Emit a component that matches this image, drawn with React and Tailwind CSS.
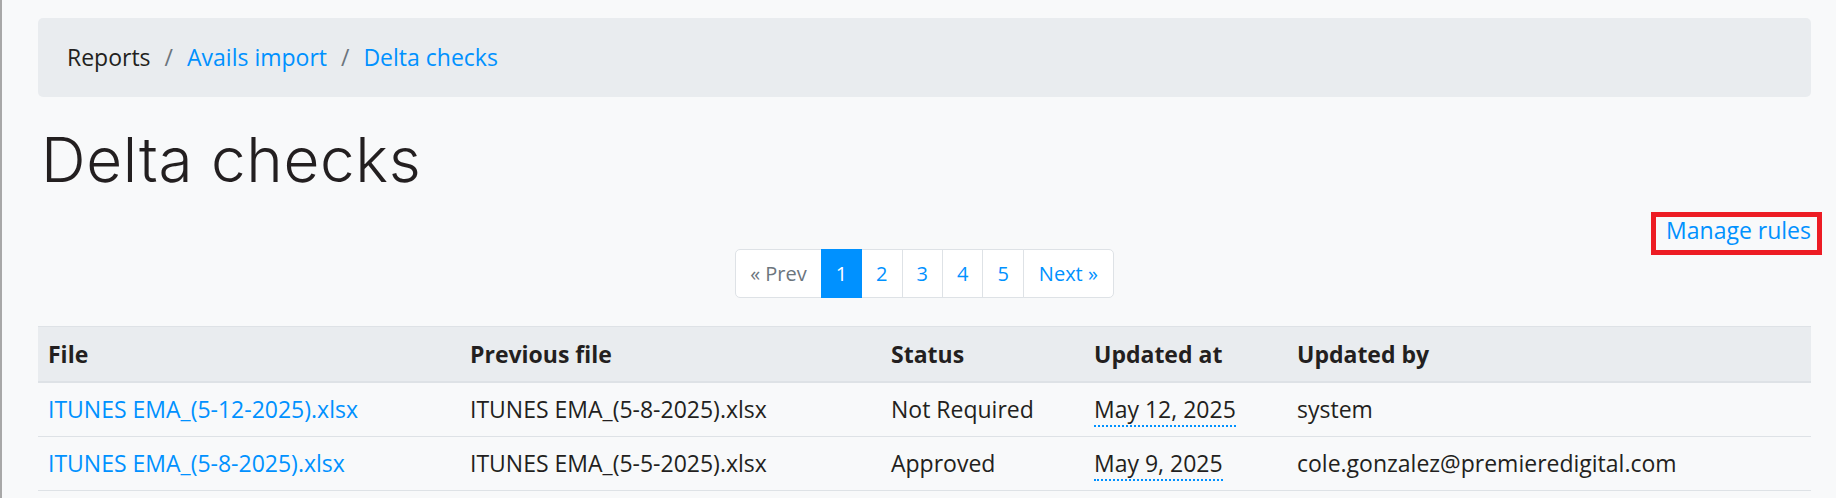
const crumbs = [
  { label: "Reports", link: false },
  { label: "Avails import", link: true },
  { label: "Delta checks", link: true },
];

const pages = ["1", "2", "3", "4", "5"];

const rows = [
  {
    file: "ITUNES EMA_(5-12-2025).xlsx",
    previous: "ITUNES EMA_(5-8-2025).xlsx",
    status: "Not Required",
    updatedAt: "May 12, 2025",
    updatedBy: "system",
  },
  {
    file: "ITUNES EMA_(5-8-2025).xlsx",
    previous: "ITUNES EMA_(5-5-2025).xlsx",
    status: "Approved",
    updatedAt: "May 9, 2025",
    updatedBy: "cole.gonzalez@premieredigital.com",
  },
];

const App = () => {
  return (
    <div className="min-h-screen bg-[#f8f9fa] border-l-2 border-[#a8a8a8] pl-[36px] pr-[25px] pt-[18px] font-['Open_Sans',sans-serif] text-[23px] leading-[35px] text-[#231f20]">
      {/* Breadcrumb */}
      <nav className="h-[79px] rounded-[5px] bg-[#e9ecef] pl-[29px] flex items-center">
        {crumbs.map((c, i) => (
          <span key={c.label} className="flex items-center">
            {i > 0 && <span className="px-[14px] text-[#6c757d]">/</span>}
            <span className={c.link ? "text-[#0091ff]" : ""}>{c.label}</span>
          </span>
        ))}
      </nav>

      {/* Title */}
      <h1 className="mt-[26px] pl-[3px] font-['Inter',sans-serif] font-light text-[62px] leading-[1.2] tracking-[0.6px] text-[#231f20]">
        Delta checks
      </h1>

      {/* Manage rules */}
      <div className="mt-[16px] flex justify-end">
        <a className="relative inline-block text-[#0091ff]">
          Manage rules
          <span className="absolute -left-[15px] -right-[11px] -top-[1px] -bottom-[7px] border-[5px] border-[#ed1c24]"></span>
        </a>
      </div>

      {/* Pagination */}
      <div className="mt-[1px] flex justify-center">
        <ul className="flex text-[20px] leading-[26px]">
          <li className="h-[49px] flex items-center px-[14px] bg-white border border-[#dee2e6] rounded-l-[5px] text-[#6c757d]">
            « Prev
          </li>
          {pages.map((p) => (
            <li
              key={p}
              className={`h-[49px] flex items-center px-[14px] -ml-px border ${
                p === "1"
                  ? "bg-[#0091ff] border-[#0091ff] text-white z-10"
                  : "bg-white border-[#dee2e6] text-[#0091ff]"
              }`}
            >
              {p}
            </li>
          ))}
          <li className="h-[49px] flex items-center px-[15px] -ml-px bg-white border border-[#dee2e6] rounded-r-[5px] text-[#0091ff]">
            Next »
          </li>
        </ul>
      </div>

      {/* Table */}
      <table className="mt-[28px] w-full table-fixed border-separate border-spacing-0">
        <thead>
          <tr className="text-left">
            <th className="w-[422px] px-[10px] py-[9.5px] bg-[#e9ecef] border-t border-b-2 border-[#dee2e6] font-bold">File</th>
            <th className="w-[421px] px-[10px] py-[9.5px] bg-[#e9ecef] border-t border-b-2 border-[#dee2e6] font-bold">Previous file</th>
            <th className="w-[203px] px-[10px] py-[9.5px] bg-[#e9ecef] border-t border-b-2 border-[#dee2e6] font-bold">Status</th>
            <th className="w-[203px] px-[10px] py-[9.5px] bg-[#e9ecef] border-t border-b-2 border-[#dee2e6] font-bold">Updated at</th>
            <th className="px-[10px] py-[9.5px] bg-[#e9ecef] border-t border-b-2 border-[#dee2e6] font-bold">Updated by</th>
          </tr>
        </thead>
        <tbody>
          {rows.map((r) => (
            <tr key={r.file}>
              <td className="px-[10px] py-[9px] border-b border-[#dee2e6] text-[#0091ff] whitespace-nowrap">{r.file}</td>
              <td className="px-[10px] py-[9px] border-b border-[#dee2e6] whitespace-nowrap">{r.previous}</td>
              <td className="px-[10px] py-[9px] border-b border-[#dee2e6] whitespace-nowrap">{r.status}</td>
              <td className="px-[10px] py-[9px] border-b border-[#dee2e6] whitespace-nowrap">
                <span className="border-b-2 border-dotted border-[#0091ff]">{r.updatedAt}</span>
              </td>
              <td className="px-[10px] py-[9px] border-b border-[#dee2e6] whitespace-nowrap">{r.updatedBy}</td>
            </tr>
          ))}
        </tbody>
      </table>
    </div>
  );
};

export default App;
